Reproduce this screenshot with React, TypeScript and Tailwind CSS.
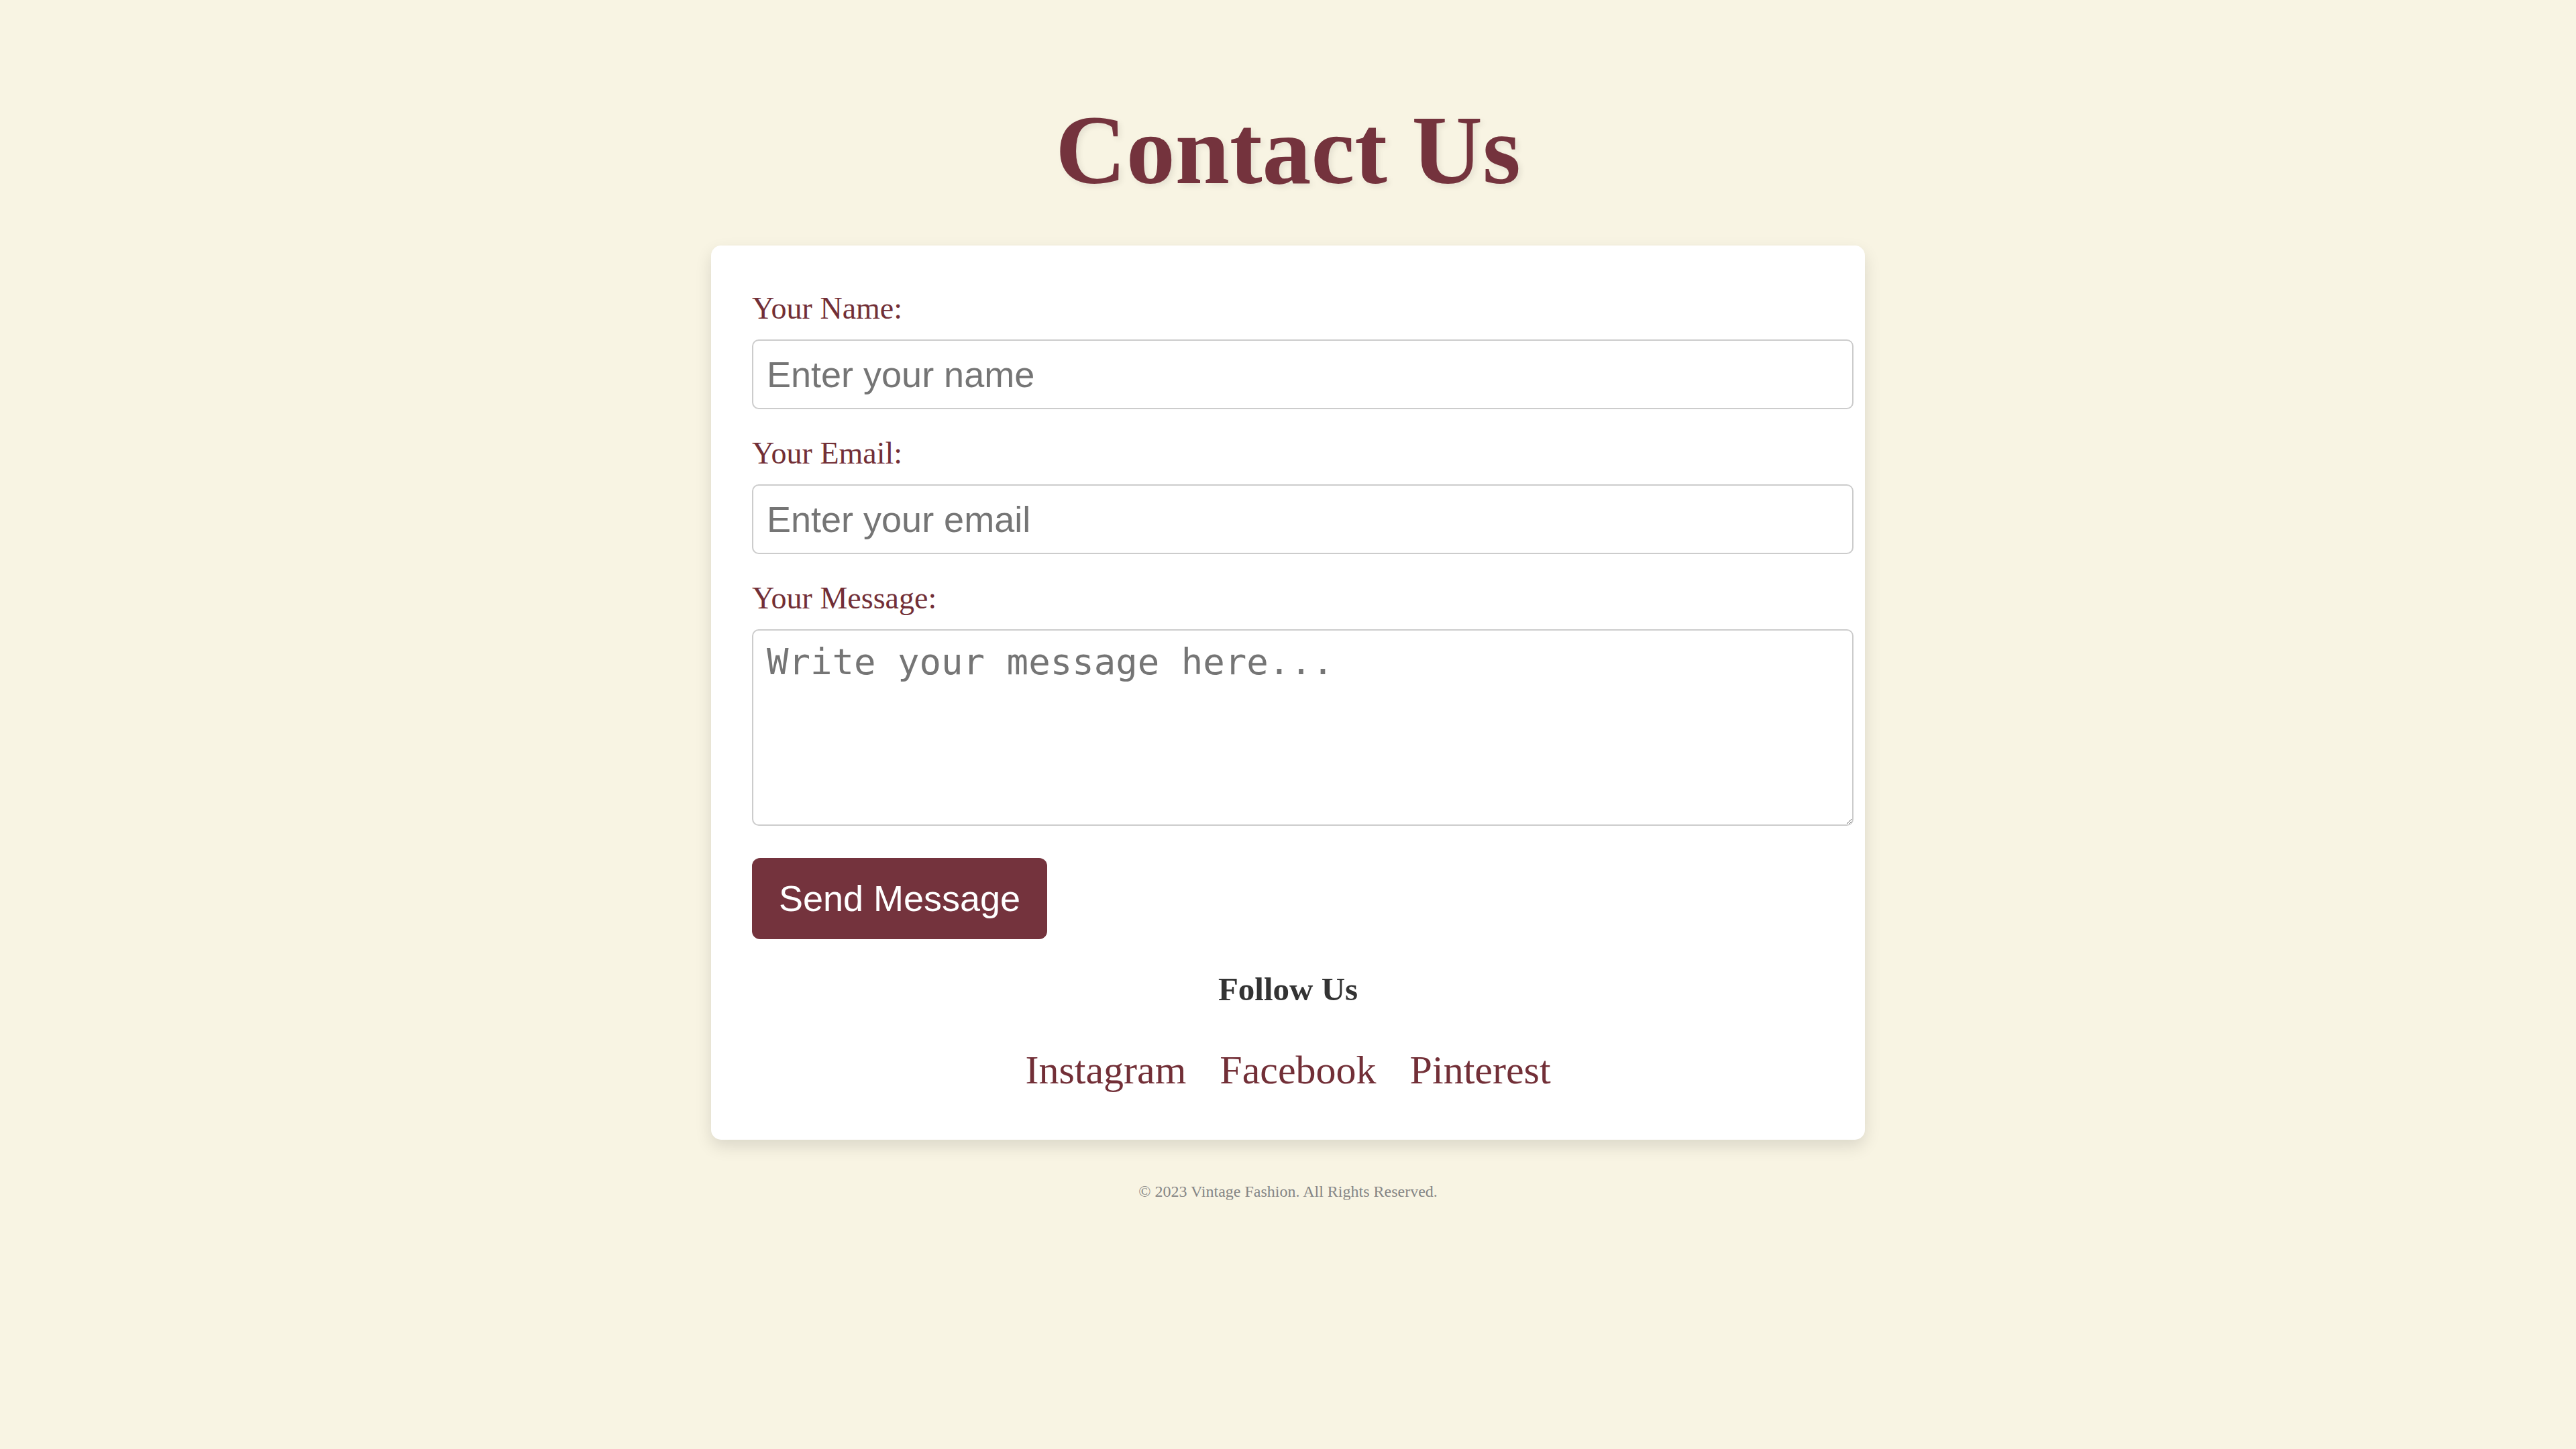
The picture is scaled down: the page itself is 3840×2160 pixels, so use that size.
import React from 'react';

const serif = "font-['Liberation_Serif','Times_New_Roman',serif]";

const Field = ({ label, placeholder, type }: { label: string; placeholder: string; type: string }) => (
  <div className="flex flex-col">
    <label className="text-[46px] leading-[46px] text-[#722f37] mb-[23px]">{label}</label>
    <input
      type={type}
      placeholder={placeholder}
      className="w-[1642px] h-[104px] px-[20px] border-[2.5px] border-[#cccccc] rounded-[10px] bg-white outline-none text-[54px] font-['Liberation_Sans',Arial,sans-serif] text-[#333] placeholder:text-[#757575]"
    />
  </div>
);

export default function App() {
  return (
    <div className={`min-h-screen w-full bg-[#f8f4e3] flex flex-col items-center pt-[151px] ${serif}`}>
      <h1 className="text-[146px] leading-[146px] font-bold text-[#74333d] [text-shadow:4px_4px_8px_rgba(0,0,0,0.08)]">
        Contact Us
      </h1>

      <div className="mt-[69px] w-[1720px] bg-white rounded-[15px] shadow-[0_10px_25px_rgba(0,0,0,0.12)] pt-[71px] pb-[74px] px-[61px] flex flex-col">
        <form className="flex flex-col" onSubmit={(e) => e.preventDefault()}>
          <Field label="Your Name:" placeholder="Enter your name" type="text" />
          <div className="mt-[43px]">
            <Field label="Your Email:" placeholder="Enter your email" type="email" />
          </div>
          <div className="mt-[43px] flex flex-col">
            <label className="text-[46px] leading-[46px] text-[#722f37] mb-[23px]">Your Message:</label>
            <textarea
              placeholder="Write your message here..."
              className="w-[1642px] h-[293px] pt-[6px] px-[20px] border-[2.5px] border-[#cccccc] rounded-[10px] bg-white outline-none text-[54px] font-['DejaVu_Sans_Mono',monospace] text-[#333] placeholder:text-[#757575]"
            />
          </div>
          <button
            type="submit"
            className="mt-[48px] w-[440px] h-[121px] rounded-[12px] bg-[#74333d] text-white text-[54px] font-['Liberation_Sans',Arial,sans-serif] flex items-center justify-center"
          >
            Send Message
          </button>
        </form>

        <div className="mt-[50px] flex flex-col items-center">
          <h3 className="text-[49px] leading-[49px] font-bold text-[#333333]">Follow Us</h3>
          <div className="mt-[66px] flex items-center gap-[50px] text-[60px] leading-[60px] text-[#722f37]">
            <a href="#">Instagram</a>
            <a href="#">Facebook</a>
            <a href="#">Pinterest</a>
          </div>
        </div>
      </div>

      <footer className="mt-[65px] text-[24px] leading-[24px] text-[#858585]">
        © 2023 Vintage Fashion. All Rights Reserved.
      </footer>
    </div>
  );
}
